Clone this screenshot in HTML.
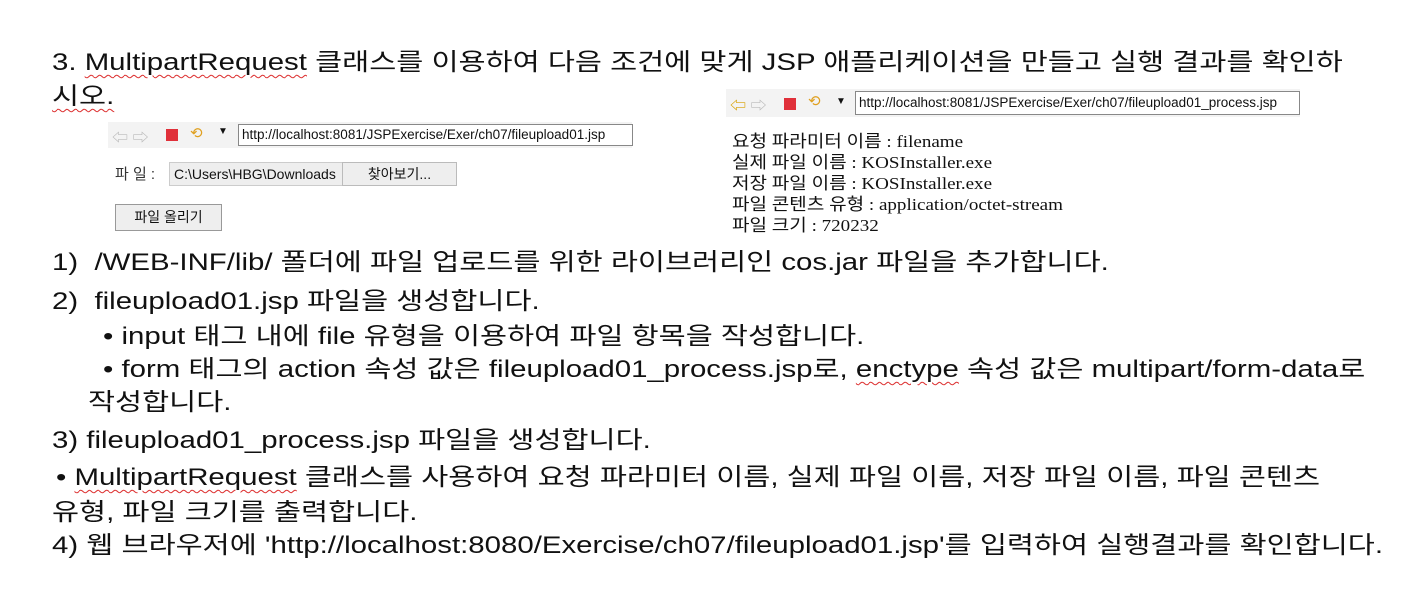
<!DOCTYPE html>
<html><head><meta charset="utf-8"><style>
body{margin:0;width:1428px;height:604px;background:#fff;position:relative;overflow:hidden;font-family:"Liberation Sans","Noto Sans CJK KR",sans-serif;color:#111}
.t{position:absolute;font-size:24px;white-space:nowrap;line-height:30px;transform:scaleX(1.225);transform-origin:0 0}
.w{text-decoration:underline wavy #d33;text-decoration-thickness:1px;text-underline-offset:4px}
.s{position:absolute;white-space:nowrap}
.bar{position:absolute;background:#f3f3f3}
.url{position:absolute;background:#fff;border:1px solid #888;font-size:13.5px;line-height:20px;padding-left:3px;overflow:hidden;font-family:"Liberation Sans","Noto Sans CJK KR",sans-serif}
.ser{font-family:"Liberation Serif","Noto Sans CJK KR",serif;font-size:17px;line-height:21px;transform:scaleX(1.12);transform-origin:0 0}
</style></head><body>
<div class="t" style="left:52px;top:48px"><span>3. </span><span class="w">MultipartRequest</span> 클래스를 이용하여 다음 조건에 맞게 JSP 애플리케이션을 만들고 실행 결과를 확인하</div>
<div class="t" style="left:52px;top:82px"><span class="w">시오.</span></div>

<div class="bar" style="left:108px;top:122px;width:524px;height:26px"></div>
<div class="s" style="left:112px;top:124px;font-size:16px;color:#bbb">⇦ ⇨</div>
<div class="s" style="left:166px;top:129px;width:12px;height:12px;background:#e0303a"></div>
<div class="s" style="left:190px;top:124px;font-size:15px;color:#e0a020">⟲</div>
<div class="s" style="left:218px;top:126px;font-size:10px">▼</div>
<div class="url" style="left:238px;top:124px;width:390px;height:20px">http://localhost:8081/JSPExercise/Exer/ch07/fileupload01.jsp</div>
<div class="s" style="left:115px;top:163px;font-size:15px;color:#333">파 일 :</div>
<div class="s" style="left:169px;top:162px;width:183px;height:22px;background:#eee;border:1px solid #ccc;font-size:14px;line-height:22px;padding-left:4px;overflow:hidden">C:\Users\HBG\Downloads</div>
<div class="s" style="left:342px;top:162px;width:113px;height:22px;background:#eee;border:1px solid #bbb;font-size:14px;line-height:22px;text-align:center">찾아보기...</div>
<div class="s" style="left:115px;top:204px;width:105px;height:25px;background:#eee;border:1px solid #999;font-size:14px;line-height:25px;text-align:center">파일 올리기</div>

<div class="bar" style="left:726px;top:89px;width:574px;height:28px"></div>
<div class="s" style="left:730px;top:92px;font-size:16px;color:#d8a000">⇦ <span style="color:#bbb">⇨</span></div>
<div class="s" style="left:784px;top:98px;width:12px;height:12px;background:#e0303a"></div>
<div class="s" style="left:808px;top:92px;font-size:15px;color:#e0a020">⟲</div>
<div class="s" style="left:836px;top:96px;font-size:10px">▼</div>
<div class="url" style="left:855px;top:91px;width:440px;height:22px;line-height:22px">http://localhost:8081/JSPExercise/Exer/ch07/fileupload01_process.jsp</div>
<div class="s ser" style="left:732px;top:131px">요청 파라미터 이름 : filename<br>실제 파일 이름 : KOSInstaller.exe<br>저장 파일 이름 : KOSInstaller.exe<br>파일 콘텐츠 유형 : application/octet-stream<br>파일 크기 : 720232</div>

<div class="t" style="left:52px;top:248px">1)&nbsp; /WEB-INF/lib/ 폴더에 파일 업로드를 위한 라이브러리인 cos.jar 파일을 추가합니다.</div>
<div class="t" style="left:52px;top:287px">2)&nbsp; fileupload01.jsp 파일을 생성합니다.</div>
<div class="t" style="left:103px;top:322px">• input 태그 내에 file 유형을 이용하여 파일 항목을 작성합니다.</div>
<div class="t" style="left:103px;top:355px">• form 태그의 action 속성 값은 fileupload01_process.jsp로, <span class="w">enctype</span> 속성 값은 multipart/form-data로</div>
<div class="t" style="left:88px;top:388px">작성합니다.</div>
<div class="t" style="left:52px;top:426px">3) fileupload01_process.jsp 파일을 생성합니다.</div>
<div class="t" style="left:56px;top:463px">• <span class="w">MultipartRequest</span> 클래스를 사용하여 요청 파라미터 이름, 실제 파일 이름, 저장 파일 이름, 파일 콘텐츠</div>
<div class="t" style="left:52px;top:498px">유형, 파일 크기를 출력합니다.</div>
<div class="t" style="left:52px;top:531px">4) 웹 브라우저에 'http://localhost:8080/Exercise/ch07/fileupload01.jsp'를 입력하여 실행결과를 확인합니다.</div>
</body></html>
